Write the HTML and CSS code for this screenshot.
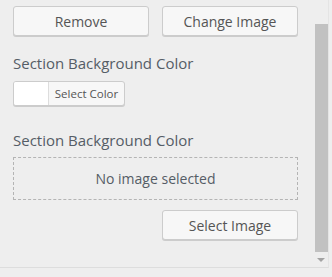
FILE: index.html
```html
<!DOCTYPE html>
<html>
<head>
<meta charset="utf-8">
<link rel="stylesheet" href="styles.css">
</head>
<body>
<div class="frame">
  <div class="content">
    <div class="btn-row">
      <button class="btn">Remove</button>
      <button class="btn">Change Image</button>
    </div>
    <div class="heading h1">Section Background Color</div>
    <button class="color-btn"><span class="swatch"></span><span class="color-label">Select Color</span></button>
    <div class="heading h2">Section Background Color</div>
    <div class="placeholder">No image selected</div>
    <div class="actions">
      <button class="btn">Select Image</button>
    </div>
  </div>
  <div class="scrollbar">
    <div class="thumb"></div>
    <div class="arrow"></div>
  </div>
</div>
</body>
</html>
```
FILE: styles.css
```css
html, body {
  margin: 0;
  padding: 0;
  background: #eeeeee;
}
body {
  font-family: "Open Sans", "Noto Sans", sans-serif;
  color: #555d66;
}
.frame {
  display: flex;
  width: 329px;
  height: 268px;
  border-bottom: 1px solid #dddddd;
  box-sizing: border-box;
  overflow: hidden;
  border-right: 1px solid #e4e4e4;
}
.content {
  width: 314px;
  box-sizing: border-box;
  padding: 6px 16px 0 13px;
}
.btn-row {
  display: grid;
  grid-template-columns: 136px 136px;
  column-gap: 13px;
}
.btn {
  height: 30px;
  background: #f7f7f7;
  border: 1px solid #cccccc;
  border-radius: 3px;
  box-shadow: 0 1px 0 #cccccc;
  font-family: "Open Sans", "Noto Sans", sans-serif;
  font-size: 14px;
  color: #555555;
  padding: 0;
  margin: 0;
}
.heading {
  font-size: 15px;
  line-height: 20px;
  color: #555d66;
}
.h1 { margin-top: 17px; }
.h2 { margin-top: 24px; }
.color-btn {
  display: flex;
  align-items: stretch;
  margin-top: 8px;
  height: 25px;
  width: 112px;
  padding: 0;
  border: 1px solid #cccccc;
  border-radius: 3px;
  box-shadow: 0 1px 0 #cccccc;
  background: #f7f7f7;
  overflow: hidden;
}
.swatch {
  width: 34px;
  background: #ffffff;
  border-right: 1px solid #dddddd;
}
.color-label {
  flex: 1;
  font-family: "Open Sans", "Noto Sans", sans-serif;
  font-size: 11.5px;
  line-height: 23px;
  color: #555555;
  text-align: center;
}
.placeholder {
  margin-top: 7px;
  height: 43px;
  box-sizing: border-box;
  border: 1px dashed #b4b4b4;
  display: flex;
  align-items: center;
  justify-content: center;
  font-size: 14px;
  color: #555d66;
}
.actions {
  display: flex;
  justify-content: flex-end;
  margin-top: 10px;
}
.actions .btn {
  width: 136px;
}
.scrollbar {
  width: 15px;
  padding-top: 24px;
  box-sizing: border-box;
  display: flex;
  flex-direction: column;
  align-items: center;
}
.thumb {
  width: 13px;
  height: 228px;
  background: #c1c1c1;
}
.arrow {
  margin-top: 6px;
  width: 0;
  height: 0;
  border-left: 4px solid transparent;
  border-right: 4px solid transparent;
  border-top: 4px solid #a3a3a3;
}
```
